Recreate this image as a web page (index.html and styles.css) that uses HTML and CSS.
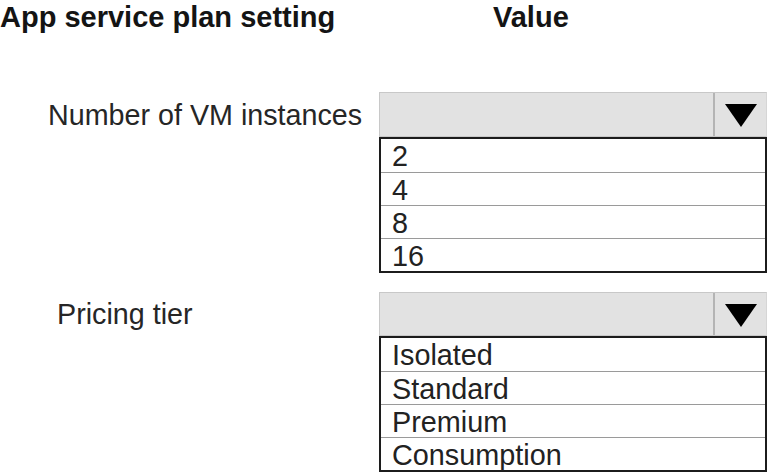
FILE: index.html
```html
<!DOCTYPE html>
<html lang="en">
<head>
    <meta charset="UTF-8">
    <meta name="viewport" content="width=device-width, initial-scale=1.0">
    <title>App service plan setting</title>
    <link rel="stylesheet" href="styles.css">
</head>
<body>
    <div class="page">
        <div class="heads">
            <div class="head head_setting">App service plan setting</div>
            <div class="head">Value</div>
        </div>

        <div class="field field_vm">
            <div class="label">Number of VM instances</div>
            <div class="select">
                <div class="select_box"></div>
                <div class="select_btn">
                    <svg width="32" height="23" viewBox="0 0 32 23"><polygon points="0,0 32,0 16,23" fill="#000"/></svg>
                </div>
            </div>
            <ul class="options">
                <li>2</li>
                <li>4</li>
                <li>8</li>
                <li>16</li>
            </ul>
        </div>

        <div class="field field_tier">
            <div class="label">Pricing tier</div>
            <div class="select">
                <div class="select_box"></div>
                <div class="select_btn">
                    <svg width="32" height="23" viewBox="0 0 32 23"><polygon points="0,0 32,0 16,23" fill="#000"/></svg>
                </div>
            </div>
            <ul class="options">
                <li>Isolated</li>
                <li>Standard</li>
                <li>Premium</li>
                <li>Consumption</li>
            </ul>
        </div>
    </div>
</body>
</html>
```

FILE: styles.css
```css
* {
    margin: 0;
    padding: 0;
    box-sizing: border-box;
}

body {
    background: #fff;
    color: #1e1e1e;
    font-family: "Liberation Sans", Arial, sans-serif;
}

.page {
    width: 771px;
}

.heads {
    display: flex;
}

.head {
    font-size: 29px;
    font-weight: bold;
    line-height: 34px;
    color: #141414;
}

.head_setting {
    width: 493px;
}

.field {
    display: grid;
    grid-template-columns: 379px 388px;
}

.field_vm {
    margin-top: 58px;
}

.field_tier {
    margin-top: 19px;
}

.label {
    grid-row: 1;
    grid-column: 1;
    align-self: center;
    font-size: 28.7px;
    line-height: 32px;
    color: #262626;
}

.field_vm .label {
    padding-left: 48px;
}

.field_tier .label {
    padding-left: 57px;
}

.select {
    grid-row: 1;
    grid-column: 2;
    display: flex;
    height: 45px;
    background: #e2e2e2;
    border: 1px solid #c8c8c8;
    border-right-color: #d6d6d6;
}

.field_tier .select {
    height: 44px;
}

.select_box {
    flex: 1;
}

.select_btn {
    width: 53px;
    border-left: 2px solid #b4b4b4;
    display: flex;
    align-items: center;
    justify-content: center;
    padding-top: 2px;
}

.options {
    grid-row: 2;
    grid-column: 2;
    list-style: none;
    border: 2px solid #1c1c1c;
    background: #fff;
}

.options li {
    height: 33px;
    padding-top: 2px;
    padding-left: 11px;
    font-size: 28.8px;
    line-height: 30px;
    border-top: 1px solid #9a9a9a;
    color: #222;
}

.options li:first-child {
    border-top: 0;
}
```
